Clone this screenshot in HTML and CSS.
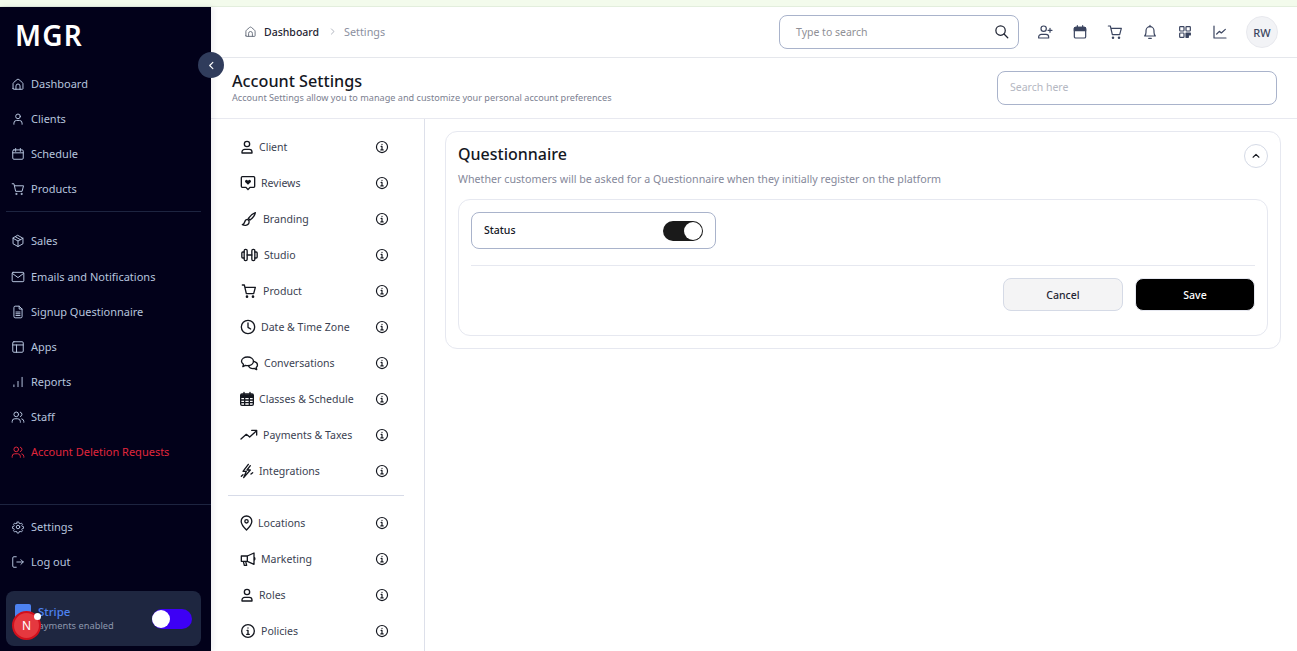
FILE: index.html
```html
<!DOCTYPE html>
<html lang="en">
<head>
    <meta charset="UTF-8">
    <meta name="viewport" content="width=device-width, initial-scale=1.0">
    <title>MGR Account Settings</title>
    <link rel="stylesheet" href="styles.css">
</head>
<body>
    <svg class="defs" aria-hidden="true">
        <symbol id="i-home" viewBox="0 0 24 24"><path d="M3.5 20V11.5a2.5 2.5 0 0 1 .9-1.9l6-5.2a2.5 2.5 0 0 1 3.2 0l6 5.2a2.5 2.5 0 0 1 .9 1.9V20a1 1 0 0 1-1 1H4.5a1 1 0 0 1-1-1z"/><path d="M8.5 21v-5.5a3.5 3.5 0 0 1 7 0V21"/></symbol>
        <symbol id="i-user" viewBox="0 0 24 24"><circle cx="12" cy="7.5" r="4"/><path d="M4.5 21v-1.5a4 4 0 0 1 4-4h7a4 4 0 0 1 4 4V21z"/></symbol>
        <symbol id="i-user-open" viewBox="0 0 24 24"><circle cx="12" cy="7.5" r="4"/><path d="M5 21v-2a4.5 4.5 0 0 1 4.5-4.5h5A4.5 4.5 0 0 1 19 19v2"/></symbol>
        <symbol id="i-cal" viewBox="0 0 24 24"><rect x="3" y="5" width="18" height="16" rx="2"/><path d="M8 2.5v5M16 2.5v5M3 10h18"/></symbol>
        <symbol id="i-cart" viewBox="0 0 24 24"><path d="M2 3h3l3 13h11l2.5-9.5H6"/><circle cx="9" cy="20.5" r="1"/><circle cx="18" cy="20.5" r="1"/></symbol>
        <symbol id="i-box" viewBox="0 0 24 24"><path d="M12 2.5l8.5 4.8v9.400L12 21.500l-8.500-4.800V7.300z"/><path d="M3.5 7.3L12 12l8.500-4.700M12 12v9.500M7.700 4.900l8.500 4.800"/></symbol>
        <symbol id="i-mail" viewBox="0 0 24 24"><rect x="2" y="4" width="20" height="16" rx="1.5"/><path d="M2.5 6L12 13l9.500-7"/></symbol>
        <symbol id="i-doc" viewBox="0 0 24 24"><path d="M5 4a2 2 0 0 1 2-2h7l5 5v13a2 2 0 0 1-2 2H7a2 2 0 0 1-2-2z"/><path d="M14 2v5h5M8.5 12h7M8.5 15h7M8.5 18h7"/></symbol>
        <symbol id="i-layout" viewBox="0 0 24 24"><rect x="3" y="3" width="18" height="18" rx="2"/><path d="M3 8.5h18M9.5 8.5V21"/></symbol>
        <symbol id="i-bars" viewBox="0 0 24 24"><path d="M5 20v-3M12 20v-9M19 20V4"/></symbol>
        <symbol id="i-users" viewBox="0 0 24 24"><circle cx="9" cy="7.5" r="4"/><path d="M2 21v-1.500a4.500 4.500 0 0 1 4.500-4.500h5a4.500 4.500 0 0 1 4.500 4.500V21M16 3.700a4 4 0 0 1 0 7.600M18.500 15.200a4.500 4.500 0 0 1 3.500 4.300V21"/></symbol>
        <symbol id="i-gear" viewBox="0 0 24 24"><circle cx="12" cy="12" r="3"/><path d="M10.300 3h3.400l.5 2.600 1.800.8 2.200-1.500 2.400 2.400-1.500 2.200.8 1.800 2.600.5v3.400l-2.600.5-.8 1.800 1.500 2.200-2.400 2.400-2.200-1.500-1.800.8-.5 2.600h-3.400l-.5-2.600-1.800-.8-2.200 1.500-2.400-2.400 1.500-2.200-.8-1.800-2.600-.5v-3.400l2.600-.5.800-1.800-1.500-2.200 2.400-2.400 2.200 1.500 1.800-.8z" transform="translate(12 12) scale(.9) translate(-12 -12.5)"/></symbol>
        <symbol id="i-logout" viewBox="0 0 24 24"><path d="M9 3H5a2 2 0 0 0-2 2v14a2 2 0 0 0 2 2h4M10 12h11M17 8l4 4-4 4"/></symbol>
        <symbol id="i-search" viewBox="0 0 24 24"><circle cx="10.5" cy="10.5" r="7.5"/><path d="M16 16l6 6"/></symbol>
        <symbol id="i-user-plus" viewBox="0 0 24 24"><circle cx="10" cy="7" r="4"/><path d="M2.5 21v-1.500a4 4 0 0 1 4-4h7a4 4 0 0 1 4 4V21zM19.500 6.500v6M16.500 9.500h6"/></symbol>
        <symbol id="i-cal-solid" viewBox="0 0 24 24"><rect x="3.5" y="5" width="17" height="16" rx="2"/><path d="M3.5 7a2 2 0 0 1 2-2h13a2 2 0 0 1 2 2v3h-17z" fill="currentColor"/><path d="M8 2.5V6M16 2.5V6"/></symbol>
        <symbol id="i-bell" viewBox="0 0 24 24"><path d="M4 18c1.500-1.500 2-3 2-5.500V10a6 6 0 0 1 12 0v2.500c0 2.500.5 4 2 5.500z"/><path d="M10 21.5h4M12 2v2"/></symbol>
        <symbol id="i-qr" viewBox="0 0 24 24"><rect x="4" y="4" width="6.5" height="6.5" rx="1"/><rect x="13.5" y="4" width="6.5" height="6.5" rx="1"/><rect x="4" y="13.5" width="6.5" height="6.5" rx="1"/><path d="M13.5 13.5H20v3h-3v3.500h-3.500z" fill="currentColor"/></symbol>
        <symbol id="i-chart" viewBox="0 0 24 24"><path d="M3 3v18h18M7 15l4-4 3 2.500L20 8"/></symbol>
        <symbol id="i-info" viewBox="0 0 24 24"><circle cx="12" cy="12" r="9.5"/><path d="M12 11v6M10 17h4M10.5 11H12"/><circle class="dot" cx="12" cy="7.5" r="1"/></symbol>
        <symbol id="i-review" viewBox="0 0 24 24"><path d="M3.5 2.5h17a1.500 1.500 0 0 1 1.500 1.500v13a1.500 1.500 0 0 1-1.500 1.500H15L12 22l-3-3.500H3.500A1.500 1.500 0 0 1 2 17V4a1.500 1.500 0 0 1 1.500-1.500z"/><path class="solid" d="M12 14.5L8 10.700a2.200 2.200 0 0 1 3.200-3l.8.800.8-.8a2.200 2.200 0 0 1 3.200 3z"/></symbol>
        <symbol id="i-brush" viewBox="0 0 24 24"><path d="M21.5 2.5c-3 1-8 5-10.500 8.500l2.500 2.500c3.500-2.500 7.500-7.500 8-11z"/><path d="M10 12.5c-3 0-4 2-4.500 4S4 20 2 20.500c3 1.500 8 1.500 9.500-1.500 1-2 .5-3.500.5-4.500z"/></symbol>
        <symbol id="i-dumbbell" viewBox="0 0 28 24"><rect x="6" y="3.5" width="4.5" height="17" rx="2"/><rect x="17.5" y="3.5" width="4.5" height="17" rx="2"/><path d="M10.5 12h7"/><path d="M6 7.5H4a1.500 1.500 0 0 0-1.500 1.500v6A1.500 1.500 0 0 0 4 16.500h2M22 7.500h2a1.500 1.500 0 0 1 1.500 1.500v6a1.500 1.500 0 0 1-1.500 1.500h-2"/></symbol>
        <symbol id="i-clock" viewBox="0 0 24 24"><circle cx="12" cy="12" r="10"/><path d="M12 6v6.5l4 2.500"/></symbol>
        <symbol id="i-chat" viewBox="0 0 28 24"><path d="M11 3c5 0 9 2.800 9 6.500S16 16 11 16c-1 0-2-.1-3-.4L4 17.500l1-3.500c-1.900-1.100-3-2.700-3-4.500C2 5.800 6 3 11 3z"/><path d="M20 9.5c3.500.7 6 3 6 5.500 0 1.500-.8 2.800-2 3.800l.8 3.200-3.800-1.800c-3.500.5-7-.8-8.500-3.700"/></symbol>
        <symbol id="i-cal-grid" viewBox="0 0 24 24"><rect x="2.5" y="4.5" width="19" height="17" rx="2"/><path d="M7.5 2v4M16.5 2v4M2.5 9.5h19M2.5 13.500h19M2.500 17.500h19M8.500 9.500v12M15.500 9.500v12"/><path class="solid" d="M3 5h18v4.500H3z"/></symbol>
        <symbol id="i-trend" viewBox="0 0 28 24"><path d="M2 18l8-7 5 4 10-9M18 5h7.500v7"/></symbol>
        <symbol id="i-bolt" viewBox="0 0 24 24"><path d="M14 2L6 12.500h5L7 22l10-11.500h-5L17 4"/><path d="M3.5 20l2.500-2.500M18 16.500l2.500-2"/></symbol>
        <symbol id="i-pin" viewBox="0 0 20 24"><path d="M10 22.5S2 15 2 9.500a8 8 0 0 1 16 0C18 15 10 22.500 10 22.500z"/><circle cx="10" cy="9.5" r="2.5"/></symbol>
        <symbol id="i-mega" viewBox="0 0 24 24"><path d="M2 7.5h9v8H2zM11 7.500L21 3v17l-10-4.500M21 9a3 3 0 0 1 0 5M5 15.500l1.500 6H10l-1.500-6"/></symbol>
        <symbol id="i-left" viewBox="0 0 24 24"><path d="M15 5l-7 7 7 7"/></symbol>
        <symbol id="i-right" viewBox="0 0 24 24"><path d="M9 5l7 7-7 7"/></symbol>
        <symbol id="i-up" viewBox="0 0 24 24"><path d="M5 15l7-7 7 7"/></symbol>
    </svg>

    <div class="top-strip"></div>

    <div class="app">
        <aside class="sidebar">
            <div class="logo">MGR</div>
            <nav class="nav nav-first">
                <a class="nav-item"><svg class="nav-icon"><use href="#i-home"></use></svg>Dashboard</a>
                <a class="nav-item"><svg class="nav-icon"><use href="#i-user-open"></use></svg>Clients</a>
                <a class="nav-item"><svg class="nav-icon"><use href="#i-cal"></use></svg>Schedule</a>
                <a class="nav-item"><svg class="nav-icon"><use href="#i-cart"></use></svg>Products</a>
            </nav>
            <div class="nav-divider"></div>
            <nav class="nav">
                <a class="nav-item nav-sales"><svg class="nav-icon"><use href="#i-box"></use></svg>Sales</a>
                <a class="nav-item"><svg class="nav-icon"><use href="#i-mail"></use></svg>Emails and Notifications</a>
                <a class="nav-item"><svg class="nav-icon"><use href="#i-doc"></use></svg>Signup Questionnaire</a>
                <a class="nav-item"><svg class="nav-icon"><use href="#i-layout"></use></svg>Apps</a>
                <a class="nav-item"><svg class="nav-icon"><use href="#i-bars"></use></svg>Reports</a>
                <a class="nav-item"><svg class="nav-icon"><use href="#i-users"></use></svg>Staff</a>
                <a class="nav-item nav-danger"><svg class="nav-icon"><use href="#i-users"></use></svg>Account Deletion Requests</a>
            </nav>
            <div class="sidebar-bottom">
                <nav class="nav">
                    <a class="nav-item"><svg class="nav-icon"><use href="#i-gear"></use></svg>Settings</a>
                    <a class="nav-item"><svg class="nav-icon"><use href="#i-logout"></use></svg>Log out</a>
                </nav>
                <div class="stripe-card">
                    <div class="stripe-logo"></div>
                    <div class="stripe-text">
                        <div class="stripe-name">Stripe</div>
                        <div class="stripe-sub">Payments enabled</div>
                    </div>
                    <div class="stripe-toggle"><span class="stripe-knob"></span></div>
                </div>
            </div>
            <div class="collapse-btn"><svg class="collapse-icon"><use href="#i-left"></use></svg></div>
            <div class="next-badge">N<span class="next-dot"></span></div>
        </aside>

        <div class="main">
            <header class="topbar">
                <div class="crumbs">
                    <svg class="crumb-home"><use href="#i-home"></use></svg>
                    <span class="crumb-link">Dashboard</span>
                    <svg class="crumb-sep"><use href="#i-right"></use></svg>
                    <span class="crumb-current">Settings</span>
                </div>
                <div class="top-search">
                    <span class="top-search-text">Type to search</span>
                    <svg class="top-search-icon"><use href="#i-search"></use></svg>
                </div>
                <div class="top-icons">
                    <svg class="top-icon"><use href="#i-user-plus"></use></svg>
                    <svg class="top-icon"><use href="#i-cal-solid"></use></svg>
                    <svg class="top-icon"><use href="#i-cart"></use></svg>
                    <svg class="top-icon"><use href="#i-bell"></use></svg>
                    <svg class="top-icon"><use href="#i-qr"></use></svg>
                    <svg class="top-icon"><use href="#i-chart"></use></svg>
                </div>
                <div class="avatar">RW</div>
            </header>

            <div class="page-head">
                <div class="page-heading">
                    <h1 class="page-title">Account Settings</h1>
                    <p class="page-sub">Account Settings allow you to manage and customize your personal account preferences</p>
                </div>
                <div class="page-search">Search here</div>
            </div>

            <div class="page-body">
                <div class="settings-list">
                    <a class="set-item"><svg class="set-icon w14"><use href="#i-user"></use></svg><span class="set-label">Client</span><svg class="info"><use href="#i-info"></use></svg></a>
                    <a class="set-item"><svg class="set-icon w16"><use href="#i-review"></use></svg><span class="set-label">Reviews</span><svg class="info"><use href="#i-info"></use></svg></a>
                    <a class="set-item"><svg class="set-icon w18"><use href="#i-brush"></use></svg><span class="set-label">Branding</span><svg class="info"><use href="#i-info"></use></svg></a>
                    <a class="set-item"><svg class="set-icon w19"><use href="#i-dumbbell"></use></svg><span class="set-label">Studio</span><svg class="info"><use href="#i-info"></use></svg></a>
                    <a class="set-item"><svg class="set-icon w18"><use href="#i-cart"></use></svg><span class="set-label">Product</span><svg class="info"><use href="#i-info"></use></svg></a>
                    <a class="set-item"><svg class="set-icon w16"><use href="#i-clock"></use></svg><span class="set-label">Date &amp; Time Zone</span><svg class="info"><use href="#i-info"></use></svg></a>
                    <a class="set-item"><svg class="set-icon w19"><use href="#i-chat"></use></svg><span class="set-label">Conversations</span><svg class="info"><use href="#i-info"></use></svg></a>
                    <a class="set-item"><svg class="set-icon w14"><use href="#i-cal-grid"></use></svg><span class="set-label">Classes &amp; Schedule</span><svg class="info"><use href="#i-info"></use></svg></a>
                    <a class="set-item"><svg class="set-icon w18"><use href="#i-trend"></use></svg><span class="set-label">Payments &amp; Taxes</span><svg class="info"><use href="#i-info"></use></svg></a>
                    <a class="set-item"><svg class="set-icon w14"><use href="#i-bolt"></use></svg><span class="set-label">Integrations</span><svg class="info"><use href="#i-info"></use></svg></a>
                    <div class="set-divider"></div>
                    <a class="set-item"><svg class="set-icon w13"><use href="#i-pin"></use></svg><span class="set-label">Locations</span><svg class="info"><use href="#i-info"></use></svg></a>
                    <a class="set-item"><svg class="set-icon w16"><use href="#i-mega"></use></svg><span class="set-label">Marketing</span><svg class="info"><use href="#i-info"></use></svg></a>
                    <a class="set-item"><svg class="set-icon w14"><use href="#i-user"></use></svg><span class="set-label">Roles</span><svg class="info"><use href="#i-info"></use></svg></a>
                    <a class="set-item"><svg class="set-icon w16"><use href="#i-info"></use></svg><span class="set-label">Policies</span><svg class="info"><use href="#i-info"></use></svg></a>
                </div>

                <div class="content">
                    <section class="card">
                        <div class="card-head">
                            <div>
                                <h2 class="card-title">Questionnaire</h2>
                                <p class="card-sub">Whether customers will be asked for a Questionnaire when they initially register on the platform</p>
                            </div>
                            <div class="chevron-btn"><svg class="chevron-icon"><use href="#i-up"></use></svg></div>
                        </div>
                        <div class="inner-card">
                            <div class="status-box">
                                <span class="status-label">Status</span>
                                <div class="toggle"><span class="toggle-knob"></span></div>
                            </div>
                            <div class="inner-line"></div>
                            <div class="actions">
                                <button class="btn btn-cancel">Cancel</button>
                                <button class="btn btn-save">Save</button>
                            </div>
                        </div>
                    </section>
                </div>
            </div>
        </div>
    </div>
</body>
</html>
```

FILE: styles.css
```css
* {
    box-sizing: border-box;
}

html, body {
    height: 100%;
}

body {
    margin: 0;
    font-family: "Noto Sans", "Liberation Sans", sans-serif;
    font-size: 11px;
    color: #1f2433;
    background-color: #fff;
    overflow: hidden;
    display: flex;
    flex-direction: column;
}

svg {
    display: block;
    flex-shrink: 0;
    fill: none;
    stroke: currentColor;
    stroke-width: 1.8;
    stroke-linecap: round;
    stroke-linejoin: round;
}

.defs {
    width: 0;
    height: 0;
    position: absolute;
}

.dot,
.solid {
    fill: currentColor;
    stroke: none;
}

.top-strip {
    height: 7px;
    flex-shrink: 0;
    background-color: #f3fbec;
    border-bottom: 1px solid #e3eedd;
}

.app {
    flex: 1;
    display: flex;
    min-height: 0;
}

/* sidebar */
.sidebar {
    position: relative;
    width: 211px;
    flex-shrink: 0;
    display: flex;
    flex-direction: column;
    background-color: #02011a;
    box-shadow: 2px 0 6px rgba(20, 20, 60, 0.08);
    z-index: 2;
}

.logo {
    height: 42px;
    padding: 13px 0 0 15px;
    font-size: 28px;
    line-height: 30px;
    font-weight: 600;
    letter-spacing: 1.2px;
    color: #fff;
}

.nav-first {
    margin-top: 17px;
}

.nav-item {
    height: 35px;
    display: flex;
    align-items: center;
    gap: 6px;
    padding-left: 11px;
    color: #b6c4de;
    white-space: nowrap;
}

.nav-sales {
    padding-bottom: 2px;
}

.nav-icon {
    width: 14px;
    height: 14px;
    stroke-width: 1.7;
}

.nav-danger {
    color: #e0263c;
}

.nav-divider {
    height: 1px;
    margin: 5px 10px 12px 6px;
    background-color: #1d2440;
}

.sidebar-bottom {
    margin-top: auto;
    padding-top: 4px;
    border-top: 1px solid #1d2440;
}

.stripe-card {
    height: 55px;
    margin: 12px 10px 5px 6px;
    padding: 0 9px;
    display: flex;
    align-items: center;
    border-radius: 8px;
    background-color: #1e2640;
}

.stripe-logo {
    width: 16px;
    height: 16px;
    margin: -13px 7px 0 0;
    border-radius: 2px;
    background-color: #4d82f0;
}

.stripe-text {
    flex: 1;
}

.stripe-name {
    font-size: 11.5px;
    line-height: 14px;
    font-weight: 500;
    color: #4d82f0;
}

.stripe-sub {
    margin-left: -5px;
    font-size: 9.3px;
    line-height: 14px;
    color: #8d97ad;
}

.stripe-toggle {
    width: 40px;
    height: 20px;
    padding: 1px 0;
    border-radius: 10px;
    background-color: #3d00f5;
}

.stripe-knob {
    display: block;
    width: 18px;
    height: 18px;
    border-radius: 50%;
    background-color: #fff;
}

.collapse-btn {
    position: absolute;
    top: 45px;
    left: 198px;
    width: 26px;
    height: 26px;
    display: flex;
    align-items: center;
    justify-content: center;
    border-radius: 50%;
    color: #fff;
    background-color: #303c5c;
}

.collapse-icon {
    width: 11px;
    height: 11px;
    stroke-width: 2.4;
}

.next-badge {
    position: absolute;
    left: 12px;
    top: 604px;
    width: 29px;
    height: 29px;
    display: flex;
    align-items: center;
    justify-content: center;
    border-radius: 50%;
    border: 2px solid #d0101c;
    color: #fff;
    font-size: 12px;
    background-color: #e5383f;
}

.next-dot {
    position: absolute;
    top: 0;
    right: -2px;
    width: 7px;
    height: 7px;
    border-radius: 50%;
    background-color: #fff;
}

/* header */
.main {
    flex: 1;
    min-width: 0;
    display: flex;
    flex-direction: column;
}

.topbar {
    height: 51px;
    flex-shrink: 0;
    display: flex;
    align-items: center;
    padding: 0 19px 0 33px;
    border-bottom: 1px solid #e5e7ec;
}

.crumbs {
    flex: 1;
    display: flex;
    align-items: center;
    padding-bottom: 1px;
}

.crumb-home {
    width: 13px;
    height: 13px;
    margin-right: 7px;
    color: #6b7280;
}

.crumb-link {
    font-size: 10.5px;
    font-weight: 500;
    color: #1f2433;
}

.crumb-sep {
    width: 9px;
    height: 9px;
    margin: 0 7px 0 9px;
    color: #8b90a0;
}

.crumb-current {
    font-size: 10.8px;
    color: #8b90a0;
}

.top-search {
    width: 240px;
    height: 34px;
    display: flex;
    align-items: center;
    justify-content: space-between;
    padding: 0 9px 1px 16px;
    border: 1px solid #a9b3cb;
    border-radius: 8px;
}

.top-search-text {
    font-size: 10.5px;
    color: #8f8f96;
}

.top-search-icon {
    width: 15px;
    height: 15px;
    color: #1f2433;
    stroke-width: 2;
}

.top-icons {
    display: flex;
    align-items: center;
    gap: 19px;
    margin: 0 18px 0 18px;
}

.top-icon {
    width: 16px;
    height: 16px;
    color: #3b4560;
}

.avatar {
    width: 32px;
    height: 32px;
    display: flex;
    align-items: center;
    justify-content: center;
    border-radius: 50%;
    border: 1px solid #e8e9ee;
    background-color: #f2f3f6;
    font-size: 11px;
    font-weight: 500;
    color: #3b4560;
}

/* page title */
.page-head {
    height: 61px;
    flex-shrink: 0;
    display: flex;
    align-items: center;
    justify-content: space-between;
    padding: 0 20px 0 21px;
    border-bottom: 1px solid #e8e9f0;
}

.page-heading {
    padding-bottom: 2px;
}

.page-title {
    margin: 0;
    font-size: 16.2px;
    line-height: 20px;
    font-weight: 500;
    color: #14171f;
}

.page-sub {
    margin: 0;
    font-size: 9.15px;
    line-height: 13px;
    color: #7b8090;
}

.page-search {
    width: 280px;
    height: 34px;
    display: flex;
    align-items: center;
    padding: 0 0 3px 12px;
    border: 1px solid #a9b3cb;
    border-radius: 8px;
    font-size: 10.5px;
    color: #b4b7c2;
}

.page-body {
    flex: 1;
    min-height: 0;
    display: flex;
}

/* settings list */
.settings-list {
    width: 214px;
    flex-shrink: 0;
    padding: 10px 0 0 17px;
    overflow: hidden;
    border-right: 1px solid #dde0ea;
}

.set-item {
    height: 36px;
    display: flex;
    align-items: center;
    gap: 5px;
    padding-left: 12px;
    padding-right: 35px;
    color: #3b4252;
}

.set-label {
    flex: 1;
    font-size: 10.55px;
    white-space: nowrap;
}

.set-icon {
    height: 16px;
    margin: 0 -1px;
    color: #14171f;
    stroke-width: 2;
}

.w13 {
    width: 15px;
}

.w14 {
    width: 16px;
}

.w16 {
    width: 18px;
}

.w18 {
    width: 20px;
}

.w19 {
    width: 21px;
}

.info {
    width: 14px;
    height: 14px;
    color: #14171f;
    stroke-width: 2;
}

.set-divider {
    height: 1px;
    margin: 6px 20px 9px 0;
    background-color: #d7dbe8;
}

/* questionnaire card */
.content {
    flex: 1;
    min-width: 0;
    padding: 12px 16px 0 20px;
}

.card {
    height: 218px;
    padding: 12px;
    border: 1px solid #e6e8f0;
    border-radius: 12px;
}

.card-head {
    display: flex;
    justify-content: space-between;
    height: 55px;
}

.card-title {
    margin: -1px 0 0 0;
    font-size: 16px;
    line-height: 22px;
    font-weight: 500;
    color: #14171f;
}

.card-sub {
    margin: 7px 0 0 0;
    font-size: 10.7px;
    line-height: 15px;
    color: #85889a;
}

.chevron-btn {
    width: 24px;
    height: 24px;
    display: flex;
    align-items: center;
    justify-content: center;
    border-radius: 50%;
    border: 1px solid #d5dae6;
}

.chevron-icon {
    width: 10px;
    height: 10px;
    color: #14171f;
    stroke-width: 2.6;
}

.inner-card {
    height: 137px;
    padding: 12px;
    border: 1px solid #e6e8f0;
    border-radius: 12px;
}

.status-box {
    width: 245px;
    height: 37px;
    display: flex;
    align-items: center;
    justify-content: space-between;
    padding: 0 12px;
    border: 1px solid #a9b3cb;
    border-radius: 8px;
}

.status-label {
    padding-bottom: 2px;
    font-size: 10.5px;
    font-weight: 500;
    color: #14171f;
}

.toggle {
    width: 40px;
    height: 20px;
    display: flex;
    justify-content: flex-end;
    padding: 1px;
    border-radius: 10px;
    background-color: #1a1a1a;
}

.toggle-knob {
    width: 18px;
    height: 18px;
    border-radius: 50%;
    background-color: #fff;
}

.inner-line {
    height: 1px;
    margin-top: 16px;
    background-color: #e6e8f0;
}

.actions {
    display: flex;
    justify-content: flex-end;
    gap: 12px;
    margin-top: 12px;
}

.btn {
    width: 120px;
    height: 33px;
    font-family: inherit;
    font-size: 10.5px;
    font-weight: 500;
    border-radius: 8px;
    cursor: pointer;
}

.btn-cancel {
    border: 1px solid #d5dae6;
    background-color: #f4f4f5;
    color: #1f2433;
}

.btn-save {
    border: 1px solid #e6e8f0;
    background-color: #000;
    color: #fff;
}
```
